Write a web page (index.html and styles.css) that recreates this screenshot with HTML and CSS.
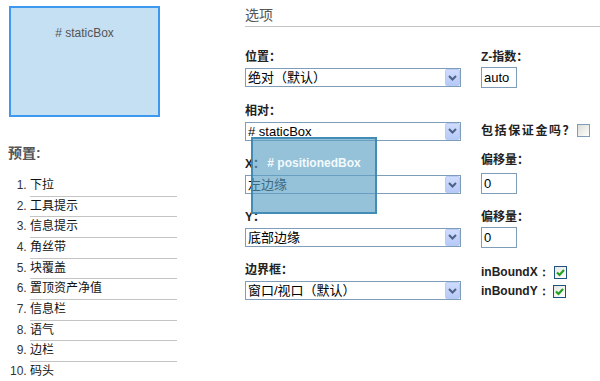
FILE: index.html
```html
<!DOCTYPE html>
<html lang="zh">
<head>
<meta charset="utf-8">
<link rel="stylesheet" href="styles.css">
</head>
<body>
<div class="page">
  <aside class="left">
    <div class="static-box"># staticBox</div>
    <h3 class="presets-title">预置:</h3>
    <ol class="presets">
      <li>下拉</li>
      <li>工具提示</li>
      <li>信息提示</li>
      <li>角丝带</li>
      <li>块覆盖</li>
      <li>置顶资产净值</li>
      <li>信息栏</li>
      <li>语气</li>
      <li>边栏</li>
      <li>码头</li>
    </ol>
  </aside>
  <main class="right">
    <h2 class="options-title">选项</h2>
    <div class="form">
      <div class="row">
        <div class="cell-main">
          <div class="label">位置：</div>
          <div class="select"><span class="select-value">绝对（默认）</span><span class="select-btn"><svg width="9" height="6" viewBox="0 0 9 6"><path d="M1 1 L4.5 4.5 L8 1" fill="none" stroke="#4d6185" stroke-width="2"/></svg></span></div>
        </div>
        <div class="cell-side">
          <div class="label">Z-指数：</div>
          <div class="input">auto</div>
        </div>
      </div>
      <div class="row">
        <div class="cell-main">
          <div class="label">相对：</div>
          <div class="select"><span class="select-value"># staticBox</span><span class="select-btn"><svg width="9" height="6" viewBox="0 0 9 6"><path d="M1 1 L4.5 4.5 L8 1" fill="none" stroke="#4d6185" stroke-width="2"/></svg></span></div>
        </div>
        <div class="cell-side cell-check">
          <div class="check-line"><span class="label label-wide">包括保证金吗？</span><span class="checkbox"></span></div>
        </div>
      </div>
      <div class="row">
        <div class="cell-main">
          <div class="label">X：</div>
          <div class="select"><span class="select-value">左边缘</span><span class="select-btn"><svg width="9" height="6" viewBox="0 0 9 6"><path d="M1 1 L4.5 4.5 L8 1" fill="none" stroke="#4d6185" stroke-width="2"/></svg></span></div>
        </div>
        <div class="cell-side cell-raised">
          <div class="label">偏移量：</div>
          <div class="input">0</div>
        </div>
      </div>
      <div class="row">
        <div class="cell-main">
          <div class="label">Y：</div>
          <div class="select"><span class="select-value">底部边缘</span><span class="select-btn"><svg width="9" height="6" viewBox="0 0 9 6"><path d="M1 1 L4.5 4.5 L8 1" fill="none" stroke="#4d6185" stroke-width="2"/></svg></span></div>
        </div>
        <div class="cell-side">
          <div class="label">偏移量：</div>
          <div class="input">0</div>
        </div>
      </div>
      <div class="row">
        <div class="cell-main">
          <div class="label">边界框：</div>
          <div class="select"><span class="select-value">窗口/视口（默认）</span><span class="select-btn"><svg width="9" height="6" viewBox="0 0 9 6"><path d="M1 1 L4.5 4.5 L8 1" fill="none" stroke="#4d6185" stroke-width="2"/></svg></span></div>
        </div>
        <div class="cell-side cell-bounds">
          <div class="check-line"><span class="label label-bound">inBoundX：</span><span class="checkbox checked"><svg width="11" height="11" viewBox="0 0 11 11"><path d="M2 5.5 L4.5 8 L9 3" fill="none" stroke="#21a121" stroke-width="2.2"/></svg></span></div>
          <div class="check-line"><span class="label label-bound label-bound-y">inBoundY：</span><span class="checkbox checked"><svg width="11" height="11" viewBox="0 0 11 11"><path d="M2 5.5 L4.5 8 L9 3" fill="none" stroke="#21a121" stroke-width="2.2"/></svg></span></div>
        </div>
      </div>
    </div>
    <div class="positioned-box"># positionedBox</div>
  </main>
</div>
</body>
</html>
```

FILE: styles.css
```css
* { box-sizing: border-box; }
html, body { margin: 0; padding: 0; background: #fff; }
body {
  font-family: "Liberation Sans", Arial, "Noto Sans CJK SC", sans-serif;
  font-size: 12px;
  color: #000;
  width: 600px;
  height: 381px;
  overflow: hidden;
}
.page { display: flex; align-items: flex-start; }

/* left column */
.left { width: 245px; flex: none; }
.static-box {
  margin: 6px 0 0 9px;
  width: 151px;
  height: 111px;
  border: 2px solid #3d98f0;
  background: #c5dff3;
  color: #555;
  text-align: center;
  font-size: 12px;
  line-height: 14px;
  padding-top: 18px;
}
.presets-title {
  margin: 27px 0 0 8px;
  font-size: 14px;
  line-height: 18px;
  font-weight: bold;
  color: #555;
}
.presets {
  margin: 14px 0 0 0;
  padding: 0 0 0 30px;
  width: 177px;
  list-style: decimal;
}
.presets li {
  line-height: 19.67px;
  border-bottom: 1px solid #c4c4c4;
  color: #111;
  font-size: 12px;
}
.presets li::marker { color: #333; }

/* right column */
.right { flex: 1; position: relative; }
.options-title {
  margin: 0;
  padding: 6px 0 2px 0;
  font-size: 14px;
  line-height: 18px;
  font-weight: normal;
  color: #555;
  border-bottom: 1px solid #c4c4c4;
}
.form { margin-top: 22px; }
.row { display: flex; gap: 20px; margin-bottom: 14.5px; }
.cell-main { width: 216px; flex: none; }
.cell-side { flex: 1; }
.label {
  display: block;
  font-size: 12px;
  line-height: 16px;
  font-weight: bold;
  color: #222;
}
.select {
  margin-top: 3px;
  height: 19px;
  border: 1px solid #7f9db9;
  background: #fff;
  display: flex;
  align-items: center;
  justify-content: space-between;
  padding: 0 0 0 2px;
}
.select-value { font-size: 13px; line-height: 17px; color: #000; white-space: nowrap; }
.select-btn {
  width: 15px;
  height: 17px;
  border: 1px solid #b7cbf5;
  border-radius: 2px;
  background: linear-gradient(#cfdcfd, #b6c9f7);
  display: flex;
  align-items: center;
  justify-content: center;
}
.input {
  margin-top: 2px;
  width: 36px;
  height: 21px;
  border: 1px solid #7f9db9;
  font-size: 13px;
  line-height: 19px;
  padding-left: 2px;
  background: #fff;
}
.cell-check { padding-top: 20px; }
.cell-raised { margin-top: -4px; }
.cell-raised .input { margin-top: 5px; }
.cell-bounds { padding-top: 2px; }
.check-line { display: flex; align-items: center; height: 16px; margin-bottom: 3px; }
.label-wide { width: 96px; letter-spacing: 1.6px; }
.label-bound { width: 73px; font-family: "Liberation Sans", Arial, sans-serif; }
.label-bound-y { width: 72px; }
.checkbox {
  width: 13px;
  height: 13px;
  border: 1px solid #1c5180;
  background: linear-gradient(135deg, #dcdcd7, #ffffff);
  display: flex;
  align-items: center;
  justify-content: center;
}
.checkbox.checked { background: linear-gradient(135deg, #e6e6e1, #ffffff); }
.cell-check .checkbox { border-color: #7f9db9; }

.positioned-box {
  position: absolute;
  left: 6px;
  top: 137px;
  width: 126px;
  height: 77px;
  border: 2px solid rgba(52, 130, 175, 0.85);
  background: rgba(92, 160, 196, 0.65);
  color: #f2f9fc;
  font-weight: bold;
  font-size: 12px;
  line-height: 14px;
  text-align: center;
  padding-top: 17px;
}
```
